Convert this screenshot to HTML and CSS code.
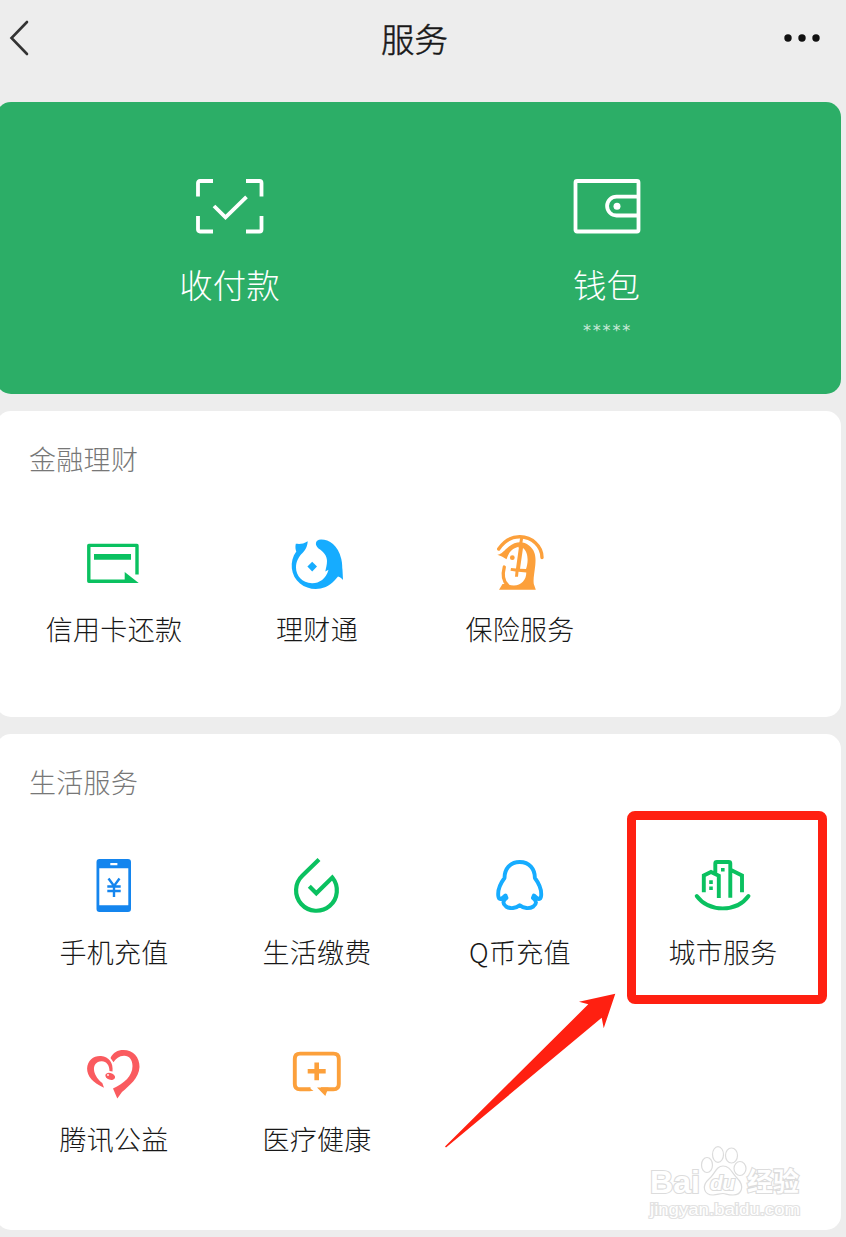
FILE: index.html
```
<!DOCTYPE html>
<html lang="zh-CN">
<head>
    <meta charset="UTF-8">
    <title>服务</title>
    <link rel="stylesheet" href="styles.css">
</head>
<body>

<header class="topbar">
    <svg class="back" width="24" height="40" viewBox="0 0 24 40">
        <path d="M20 4 L4.500 20 L20 36"/>
    </svg>
    <h1>服务</h1>
    <svg class="more" width="40" height="12" viewBox="0 0 40 12">
        <circle cx="6" cy="6" r="3.700"/>
        <circle cx="20" cy="6" r="3.700"/>
        <circle cx="34" cy="6" r="3.700"/>
    </svg>
</header>

<main>
    <section class="card pay">
        <div class="pay-item">
            <svg class="line" width="68" height="56" viewBox="0 0 68 56">
                <path d="M2 17.500 V4 Q2 2 4 2 H17 M50 2 H63.500 Q65.500 2 65.500 4 V17.500 M65.500 37 V50.500 Q65.500 52.500 63.500 52.500 H50 M17 52.500 H4 Q2 52.500 2 50.500 V37"/>
                <path d="M18 27 L29.500 38.300 L50.500 17.800"/>
            </svg>
            <span class="pay-name">收付款</span>
        </div>
        <div class="pay-item">
            <svg class="line" width="68" height="56" viewBox="0 0 68 56">
                <rect x="2.500" y="2" width="63" height="50.500" rx="1.500"/>
                <path d="M65 17.700 H43.500 A9.400 9.400 0 0 0 43.500 36.500 H65"/>
                <circle class="dot" cx="44" cy="27.300" r="3.500"/>
            </svg>
            <span class="pay-name">钱包</span>
            <span class="balance">*****</span>
        </div>
    </section>

    <section class="card finance">
        <h2>金融理财</h2>
        <div class="grid">
            <div class="item">
                <svg class="green" width="60" height="60" viewBox="0 0 60 60">
                    <path d="M53 41.500 V12.400 H4.800 V48.300 H42" stroke-width="3.400" stroke-linejoin="round"/>
                    <path class="fill" d="M40.700 39 L54.700 50 H40.700 Z M10 21 H47 V26.700 H10 Z"/>
                </svg>
                <span>信用卡还款</span>
            </div>
            <div class="item">
                <svg class="sky" width="60" height="60" viewBox="0 0 60 60">
                    <path class="fill" d="M20.700 8.300 C16 11.500 12 11 8.800 10.800 C8 14 8.600 17 9.300 18.500 C2 28 3.500 43 13 50.500 C23 58.500 38 58 47.500 47.500 L51 43.500 C53 44 54.500 45 56 47 L55.500 37 C55 34 55.500 31 54.300 26 C51 12 42 6.500 34 6.600 C28 7 27.500 12 31.500 15.500 C37 19 40 23 40 28 C40 32 39 34.500 38.300 38.500 L41.500 36.800 C39 46 32 50.500 25 50.300 C15 50 9 42.500 9 34.500 C9 28 12 23.500 15.500 20 C19.500 16 20.500 12 20.700 8.300 Z"/>
                    <path class="fill" d="M25.200 28.800 L30 33.600 L25.200 38.400 L20.400 33.600 Z"/>
                </svg>
                <span>理财通</span>
            </div>
            <div class="item">
                <svg class="orange" width="60" height="60" viewBox="0 0 60 60">
                    <path d="M8.700 16 C15 6.500 23 3.700 30 3.800 C42 4 52 13 52 24.500" stroke-width="3.400" stroke-linecap="round"/>
                    <path class="fill" fill-rule="evenodd" d="M7.300 21.800 C12 21 14 17.500 19 13.500 C25 8.800 33 7.500 39 12.500 C45.500 17.500 46 24 45.300 32 C44.500 40 43 46 43.800 51 L45.800 56.700 H9 L12.500 51 L17 51 C28 55.500 36.300 49 36.300 39.500 L28.500 38.700 L28 43.700 H25 L25.500 38.500 L20.500 37.800 L21 35 L26 35.500 L29 13.800 C22 15 18.500 20 16.500 26.300 Q12 23 7.300 21.800 Z M33 15 L30 35.800 L36 36 C38.500 29 38.500 19 33 15 Z"/>
                    <path d="M14.300 34 C12.500 41 13 48 17.500 52" stroke-width="3.300" stroke-linecap="round"/>
                    <path d="M31.800 4 L30 15" stroke-width="3"/>
                    <circle class="fill" cx="22.300" cy="24.700" r="2.400"/>
                </svg>
                <span>保险服务</span>
            </div>
        </div>
    </section>

    <section class="card life">
        <h2>生活服务</h2>
        <div class="grid">
            <div class="item">
                <svg class="blue" width="60" height="60" viewBox="0 0 60 60">
                    <path class="fill" fill-rule="evenodd" d="M15.500 4 H44 Q47 4 47 7 V54 Q47 57 44 57 H15.500 Q12.500 57 12.500 54 V7 Q12.500 4 15.500 4 Z M15.300 13.300 V50.200 H44.300 V13.300 Z M26.300 8 V10.200 H33.400 V8 Z"/>
                    <path d="M24.500 23.500 L30 31 L35.500 23.500 M23.300 31.500 H36.700 M23.300 36 H36.700 M30 31 V42" stroke-width="2.400"/>
                </svg>
                <span>手机充值</span>
            </div>
            <div class="item">
                <svg class="green" width="60" height="60" viewBox="0 0 60 60">
                    <path d="M32 4.500 L15.500 20.500 A20.400 20.400 0 1 0 45.300 22.500 L29.300 38.300 L22.300 31.300" stroke-width="4.200"/>
                </svg>
                <span>生活缴费</span>
            </div>
            <div class="item">
                <svg class="sky" width="60" height="60" viewBox="0 0 60 60">
                    <path d="M29.700 7 C20 7 14.500 14 14.500 23 C10 29 7.700 36 8.300 41 C8.800 45 11 45 15.500 40.500 L16.500 43 C12.500 46 12.500 49 16 51.500 C20 54 26 53.500 29.700 50.300 C33.400 53.500 39.400 54 43.400 51.500 C46.900 49 46.900 46 42.900 43 L43.900 40.500 C48.400 45 50.600 45 51.100 41 C51.700 36 49.400 29 44.900 23 C44.900 14 39.400 7 29.700 7 Z" stroke-width="3.900" stroke-linejoin="round"/>
                </svg>
                <span>Q币充值</span>
            </div>
            <div class="item marked">
                <svg class="green" width="60" height="60" viewBox="0 0 60 60">
                    <path d="M22.300 18 V8.500 Q22.300 7 24 7 H35.700 Q37.300 7 37.300 8.500 V42.800 M10.800 37.300 V20.500 L18 17 L25.800 20.800 V43 M38 15 L49 20.500 V37.300" stroke-width="3.900"/>
                    <path class="fill" d="M28 13 H31.600 V16.600 H28 Z M16.200 25.300 H19.800 V28.900 H16.200 Z M16.200 31.500 H19.800 V35.100 H16.200 Z"/>
                    <path d="M3.700 41 C16 57.500 43.500 57.500 55.500 41" stroke-width="3.900" stroke-linecap="round"/>
                </svg>
                <span>城市服务</span>
            </div>
            <div class="item">
                <svg class="red" width="60" height="60" viewBox="0 0 60 60">
                    <path class="fill" d="M20 45.700 C9 41 3 34 3.100 26.500 C3.500 18 10 13.500 17 14 C25 14.500 29.500 21 28.500 29.500 L25.500 29 C25.500 23 22 19 17.500 19.300 C12 19.500 9.500 23.500 10 28 C10.500 33.500 15 38.500 18.300 41 Z"/>
                    <path class="fill" d="M26.500 16 C29 10.500 34 7.900 39.500 8 C49 8 55.700 15 55.500 25 C55 36 45 44 38 50 L33.300 56.500 L29 46.500 C40 41.500 48.500 34 48.500 24 C48.500 17.500 45 13.500 40 13.700 C35 14 32 16.500 29.500 20.300 Z"/>
                    <ellipse class="fill" cx="26.300" cy="34.300" rx="5" ry="3.300" transform="rotate(18 26 34)"/>
                    <circle cx="24" cy="33" r="0.900" fill="#fff"/>
                </svg>
                <span>腾讯公益</span>
            </div>
            <div class="item">
                <svg class="orange" width="60" height="60" viewBox="0 0 60 60">
                    <path d="M23.500 47.300 H13 Q7.800 47.300 7.800 42 V17 Q7.800 11.600 13 11.600 H46.500 Q51.800 11.600 51.800 17 V42 Q51.800 47.300 46.500 47.300 H34" stroke-width="3.900"/>
                    <path class="fill" d="M22 45.500 L26.500 49.100 H20 Z M30 45.500 H41.500 L38.300 54 Z"/>
                    <path d="M20.700 29.300 H38.700 M29.700 20.400 V38.200" stroke-width="4.600"/>
                </svg>
                <span>医疗健康</span>
            </div>
        </div>
    </section>
</main>

<!-- arrow pointing at the city services tile -->
<svg class="arrow" width="172" height="156" viewBox="0 0 172 156">
    <path d="M1 154.500 L144.300 12.300 L135 9.700 L171.300 1.700 L159.700 36.300 L157.700 25.700 L2 155.500 Z"/>
</svg>

<svg class="watermark" width="160" height="80" viewBox="0 0 160 80">
    <text x="4" y="48.500" font-size="32" font-weight="700" textLength="50" lengthAdjust="spacingAndGlyphs">Bai</text>
    <ellipse cx="61" cy="21" rx="5.500" ry="7.500"/>
    <ellipse cx="72" cy="10.500" rx="5.500" ry="7.800"/>
    <ellipse cx="85.500" cy="11.500" rx="6" ry="7.500"/>
    <ellipse cx="94" cy="24.500" rx="6" ry="7"/>
    <path d="M77 22 C84 22 86 29 91 34 C99 42 96 51 87 51 C81 51 80 49.500 77 49.500 C73 49.500 72 51 67 51 C58 51 55 42 63 35 C69 30 70 22 77 22 Z"/>
    <text x="64" y="46" font-size="21" font-weight="700" font-style="italic" textLength="25">du</text>
    <text x="101" y="47" font-size="26" font-weight="700" textLength="52">经验</text>
    <text class="site" x="4" y="71" font-size="16" textLength="150" lengthAdjust="spacingAndGlyphs">jingyan.baidu.com</text>
</svg>

</body>
</html>
```
FILE: styles.css
```
* {
    box-sizing: border-box;
}

body {
    margin: 0;
    height: 1237px;
    position: relative;
    overflow: hidden;
    background: #ededed;
    color: #181818;
    font-family: "Noto Sans CJK SC", sans-serif;
    font-weight: 300;
}

svg {
    display: block;
    fill: none;
}

.topbar {
    height: 102px;
    padding: 18px 24px 0 7px;
    display: flex;
    justify-content: space-between;
    align-items: flex-start;
}

.topbar h1 {
    margin: 0 0 0 16px;
    font-size: 33.5px;
    font-weight: 300;
    line-height: 40px;
    -webkit-text-stroke: 0.5px #181818;
}

.back {
    stroke: #333;
    stroke-width: 2.6px;
    stroke-linecap: round;
}

.more {
    margin-top: 14px;
    fill: #111;
}

main {
    display: flex;
    flex-direction: column;
    gap: 17px;
    width: 841px;
}

.card {
    margin-left: -4px;
    border-radius: 15px;
    background: #fff;
}

.pay {
    height: 292px;
    padding: 77px 46px 0 45px;
    display: flex;
    background: #2cae67;
    color: #fff;
}

.pay-item {
    flex: 1;
    display: flex;
    flex-direction: column;
    align-items: center;
}

.line {
    stroke: #fff;
    stroke-width: 3.8px;
}

.dot {
    fill: #fff;
    stroke: none;
}

.pay-name {
    margin-top: 27px;
    font-size: 33.5px;
    line-height: 44px;
}

.balance {
    margin: 15px 0 0 2px;
    font-family: "DejaVu Sans", sans-serif;
    font-size: 16px;
    font-weight: 400;
    line-height: 20px;
    letter-spacing: 1.8px;
    opacity: 0.75;
}

.finance {
    height: 306px;
}

.life {
    height: 496px;
}

.finance, .life {
    padding: 30px 0 0 16px;
}

.card h2 {
    margin: 0 0 0 17px;
    font-size: 27px;
    font-weight: 300;
    line-height: 36px;
    letter-spacing: 0.3px;
    color: #777;
}

.grid {
    margin-top: 56px;
    display: grid;
    grid-template-columns: repeat(4, 203px);
    grid-auto-rows: 187px;
}

.life .grid {
    margin-top: 55px;
}

.item {
    position: relative;
    display: flex;
    flex-direction: column;
    align-items: center;
    gap: 18px;
}

.life .item {
    gap: 19px;
}

.item span {
    padding-left: 1px;
    font-size: 27px;
    line-height: 36px;
    letter-spacing: 0.3px;
    white-space: nowrap;
}

.marked::after {
    content: "";
    box-sizing: border-box;
    position: absolute;
    left: 6px;
    top: -44px;
    width: 200px;
    height: 193px;
    border: 9px solid #ff2011;
    border-radius: 8px;
}

.green {
    stroke: #0ac160;
}

.green .fill {
    fill: #0ac160;
}

.sky {
    stroke: #16acff;
}

.sky .fill {
    fill: #16acff;
}

.orange {
    stroke: #fca03b;
}

.orange .fill {
    fill: #fca03b;
}

.blue {
    stroke: #1485ee;
}

.blue .fill {
    fill: #1485ee;
}

.red .fill {
    fill: #fa5b5f;
}

svg .fill {
    stroke: none;
}

.arrow {
    position: absolute;
    left: 444px;
    top: 992px;
    fill: #ff2011;
}

.watermark {
    position: absolute;
    left: 646px;
    top: 1144px;
    fill: #fff;
    stroke: #dcdcdc;
    stroke-width: 1.2px;
    font-family: "Liberation Sans", "Noto Sans CJK SC", sans-serif;
}

.watermark text {
    paint-order: stroke;
    stroke-width: 2.2px;
}

.watermark .site {
    font-weight: 400;
    stroke: #e2e2e2;
}
```
